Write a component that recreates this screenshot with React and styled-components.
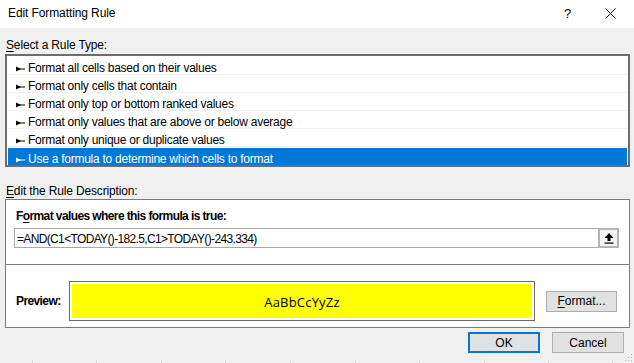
import React from "react";
import styled, { createGlobalStyle } from "styled-components";

const Global = createGlobalStyle`
  html, body { margin: 0; padding: 0; background: #f0f0f0; }
  body { font-family: "Liberation Sans", Arial, sans-serif; font-size: 12px; color: #000; }
  #root { width: 634px; height: 363px; }
`;

const Dialog = styled.div`
  position: relative;
  width: 634px;
  height: 363px;
  background: #f0f0f0;
  display: flex;
  flex-direction: column;
  overflow: hidden;
`;

const TitleBar = styled.div`
  height: 28px;
  flex: none;
  background: #fff;
  display: flex;
  align-items: center;
  padding-left: 8px;
  padding-bottom: 1px;
  box-sizing: border-box;
`;

const Title = styled.div`
  flex: 1;
  font-size: 12px;
  line-height: 15px;
  letter-spacing: -0.1px;
`;

const HelpGlyph = styled.div`
  width: 10px;
  margin-right: 31px;
  font-size: 13px;
  line-height: 15px;
`;

const CloseGlyph = styled.div`
  width: 12px;
  margin-right: 17px;
  display: flex;
  align-items: center;
`;

const Body = styled.div`
  flex: 1;
  display: flex;
  flex-direction: column;
  padding: 0 4px 0 5px;
`;

const SectionLabel = styled.div`
  margin-top: ${(p) => p.$top}px;
  height: 15px;
  box-sizing: border-box;
  padding-top: 2px;
  line-height: 15px;
  padding-left: 1px;
  letter-spacing: -0.15px;
`;

const ListBox = styled.div`
  margin-top: 3px;
  border: 2px solid #6d6d6d;
  background: #fff;
  padding: 1px 1px 0 1px;
  display: flex;
  flex-direction: column;
`;

const Row = styled.div`
  height: 18px;
  box-sizing: border-box;
  padding-top: 6px;
  border-bottom: 1px solid #f0f0f0;
  border-top: ${(p) => (p.$selected ? "1px solid #fff" : "none")};
  background: ${(p) => (p.$selected ? "#0078d7" : "#fff")};
  background-clip: padding-box;
  color: ${(p) => (p.$selected ? "#fff" : "#000")};
  display: flex;
  align-items: center;
  padding-left: 8px;
  line-height: 15px;
  letter-spacing: -0.25px;
  &:last-child { border-bottom: none; }
`;

const RowArrow = styled.svg`
  width: 9px;
  height: 6px;
  margin-right: 3px;
  flex: none;
`;

const DescBox = styled.div`
  margin-top: 2px;
  border: 1px solid #7a7a7a;
  background: #fff;
  display: flex;
  flex-direction: column;
`;

const FormulaSection = styled.div`
  height: 65px;
  box-sizing: border-box;
  padding: 9px 10px 0 8px;
  border-bottom: 1px solid #7a7a7a;
  display: flex;
  flex-direction: column;
`;

const BoldLabel = styled.div`
  font-weight: bold;
  line-height: 15px;
  letter-spacing: -0.6px;
  padding-left: ${(p) => p.$indent || 0}px;
  width: ${(p) => (p.$width ? p.$width + "px" : "auto")};
  flex: none;
`;

const FormulaInput = styled.div`
  margin-top: 4px;
  height: 20px;
  box-sizing: border-box;
  border: 1px solid #a9a9a9;
  display: flex;
  align-items: stretch;
`;

const FormulaText = styled.div`
  flex: 1;
  padding-left: 2px;
  padding-top: 1px;
  line-height: 18px;
  letter-spacing: -0.65px;
`;

const CollapseButton = styled.div`
  width: 21px;
  box-sizing: border-box;
  border: 2px solid #b4b4b4;
  background: #f4f4f4;
  display: flex;
  align-items: center;
  justify-content: center;
  margin: -1px -1px -1px 0;
`;

const PreviewSection = styled.div`
  height: 62px;
  box-sizing: border-box;
  padding: 16px 0 6px 10px;
  display: flex;
  align-items: center;
`;

const PreviewFrame = styled.div`
  width: 466px;
  height: 40px;
  box-sizing: border-box;
  border: 1px solid #6d6d6d;
  padding: 2px;
  background: #fff;
  flex: none;
`;

const PreviewFill = styled.div`
  height: 100%;
  background: #ffff00;
  display: flex;
  align-items: center;
  justify-content: center;
  font-family: "Open Sans", "Liberation Sans", sans-serif;
  font-size: 13px;
  letter-spacing: 0.2px;
  padding-top: 1px;
  box-sizing: border-box;
`;

const Button = styled.div`
  width: ${(p) => p.$w}px;
  height: 21px;
  box-sizing: border-box;
  border: ${(p) => (p.$default ? "2px solid #0078d7" : "1px solid #adadad")};
  background: #e1e1e1;
  display: flex;
  align-items: center;
  justify-content: center;
  padding-top: 1px;
  line-height: 15px;
  flex: none;
  margin-left: ${(p) => p.$ml || 0}px;
`;

const ButtonRow = styled.div`
  margin-top: 4px;
  display: flex;
  justify-content: flex-end;
  padding-right: 6px;
  gap: 12px;
`;

const Ticks = styled.div`
  position: absolute;
  left: 0;
  right: 0;
  bottom: 0;
  height: 2px;
  background: repeating-linear-gradient(
    to right,
    transparent 0px,
    transparent 32px,
    #cfcfcf 32px,
    #cfcfcf 33px,
    transparent 33px,
    transparent 64.5px
  );
`;

const Grip = styled.svg`
  position: absolute;
  right: 1px;
  bottom: 1px;
`;

const U = styled.span`
  text-decoration: underline;
  text-underline-offset: 2px;
`;

const rules = [
  "Format all cells based on their values",
  "Format only cells that contain",
  "Format only top or bottom ranked values",
  "Format only values that are above or below average",
  "Format only unique or duplicate values",
  "Use a formula to determine which cells to format",
];

function Arrow({ color }) {
  return (
    <RowArrow viewBox="0 0 9 6">
      <polygon points="0,0.5 5,3 0,5.5" fill={color} />
      <rect x="3" y="2.5" width="6" height="1" fill={color} />
    </RowArrow>
  );
}

export default function App() {
  return (
    <>
      <Global />
      <Dialog>
        <TitleBar>
          <Title>Edit Formatting Rule</Title>
          <HelpGlyph>?</HelpGlyph>
          <CloseGlyph>
            <svg width="11" height="11" viewBox="0 0 11 11">
              <path d="M0.5 0.5 L10.5 10.5 M10.5 0.5 L0.5 10.5" stroke="#000" strokeWidth="1" />
            </svg>
          </CloseGlyph>
        </TitleBar>
        <Body>
          <SectionLabel $top={8}>
            <U>S</U>elect a Rule Type:
          </SectionLabel>
          <ListBox>
            {rules.map((r, i) => {
              const sel = i === rules.length - 1;
              return (
                <Row key={r} $selected={sel}>
                  <Arrow color={sel ? "#fff" : "#000"} />
                  {r}
                </Row>
              );
            })}
          </ListBox>
          <SectionLabel $top={15}>
            <U>E</U>dit the Rule Description:
          </SectionLabel>
          <DescBox>
            <FormulaSection>
              <BoldLabel $indent={2}>
                F<U>o</U>rmat values where this formula is true:
              </BoldLabel>
              <FormulaInput>
                <FormulaText>=AND(C1&lt;TODAY()-182.5,C1&gt;TODAY()-243.334)</FormulaText>
                <CollapseButton>
                  <svg width="10" height="11" viewBox="0 0 10 11">
                    <polygon points="5,0 9.5,5 6.5,5 6.5,8 3.5,8 3.5,5 0.5,5" fill="#000" />
                    <rect x="0.5" y="9.5" width="9" height="1.2" fill="#000" />
                  </svg>
                </CollapseButton>
              </FormulaInput>
            </FormulaSection>
            <PreviewSection>
              <BoldLabel $width={53}>Preview:</BoldLabel>
              <PreviewFrame>
                <PreviewFill>AaBbCcYyZz</PreviewFill>
              </PreviewFrame>
              <Button $w={71} $ml={11}>
                <span>
                  <U>F</U>ormat...
                </span>
              </Button>
            </PreviewSection>
          </DescBox>
          <ButtonRow>
            <Button $w={72} $default>
              OK
            </Button>
            <Button $w={72}>Cancel</Button>
          </ButtonRow>
        </Body>
        <Ticks />
        <Grip width="8" height="8" viewBox="0 0 8 8">
          <rect x="6" y="0" width="1" height="1" fill="#b0b0b0" />
          <rect x="3" y="3" width="1" height="1" fill="#b0b0b0" />
          <rect x="6" y="3" width="1" height="1" fill="#b0b0b0" />
          <rect x="0" y="6" width="1" height="1" fill="#b0b0b0" />
          <rect x="3" y="6" width="1" height="1" fill="#b0b0b0" />
          <rect x="6" y="6" width="1" height="1" fill="#b0b0b0" />
        </Grip>
      </Dialog>
    </>
  );
}
